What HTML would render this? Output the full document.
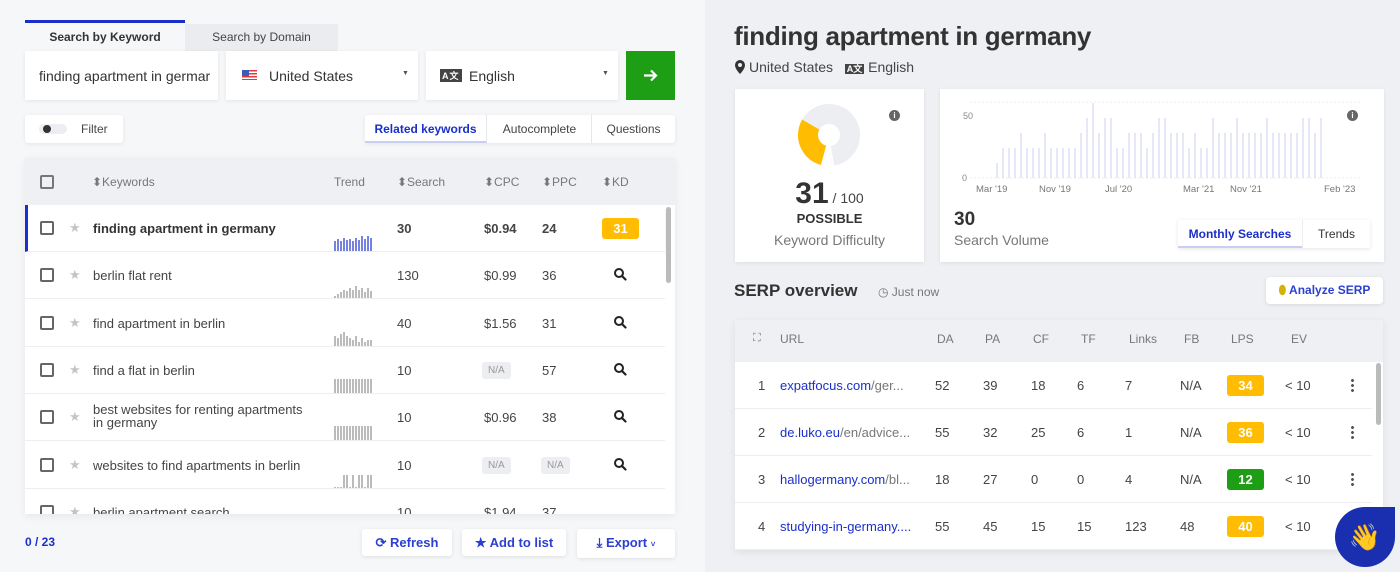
<!DOCTYPE html><html><head><meta charset="utf-8"><style>
*{box-sizing:border-box;margin:0;padding:0}
body{width:1400px;height:572px;overflow:hidden;font-family:"Liberation Sans",sans-serif;background:#f6f7f9;position:relative;color:#333}
.a{position:absolute}
.card{background:#fff;box-shadow:0 1px 4px rgba(0,0,0,.08)}
.t13{font-size:13px}
.cb{width:14px;height:14px;border:2px solid #666;border-radius:2px;position:absolute}
.row .star{color:#c4c4c4!important;font-size:13px;position:absolute}
.row{position:absolute;left:25px;width:640px;height:47px;background:#fff;border-bottom:1px solid #eceef2}
.row span{position:absolute;font-size:13px;color:#444}
.row svg.mg{position:absolute;left:589px;top:16px}
.na{background:#eceef1;color:#999!important;font-size:10px!important;padding:3px 6px;border-radius:3px}
.srow{position:absolute;left:735px;width:637px;height:47px;background:#fff;border-bottom:1px solid #eceef2}
.srow span{position:absolute;font-size:13px;color:#444;top:16px}
.badge{position:absolute;width:37px;height:21px;border-radius:3px;color:#fff;font-size:13px;font-weight:bold;text-align:center;line-height:21px;top:13px}
.dots{position:absolute;left:616px;top:16px;width:3px;height:14px;background:radial-gradient(circle,#555 1.3px,transparent 1.6px) 0 0/3px 5px}
.btn{position:absolute;background:#fff;box-shadow:0 1px 4px rgba(0,0,0,.1);border-radius:3px;font-size:13px;font-weight:bold;color:#2b3fd0;text-align:center;line-height:27px}
</style></head><body>
<svg width="0" height="0" style="position:absolute"><defs><g id="mg"><circle cx="5" cy="5" r="4" fill="none" stroke="#222" stroke-width="2"/><path d="M8 8L11.5 11.5" stroke="#222" stroke-width="2.2" stroke-linecap="round"/></g></defs></svg>
<div class="a" style="left:705px;top:0;width:695px;height:572px;background:#eef0f3"></div>

<div class="a" style="left:25px;top:20px;width:160px;height:31px;background:#f6f7f9;border-top:3px solid #1a2fc9;font-size:12px;font-weight:bold;color:#333;text-align:center;line-height:28px">Search by Keyword</div>
<div class="a" style="left:185px;top:24px;width:153px;height:27px;background:#eaecef;font-size:12px;color:#444;text-align:center;line-height:27px">Search by Domain</div>
<div class="a card" style="left:25px;top:51px;width:193px;height:49px;font-size:14px;color:#333;padding:17px 0 0 14px;white-space:nowrap;overflow:hidden">finding apartment in germar</div>
<div class="a card" style="left:226px;top:51px;width:192px;height:49px;font-size:14px;color:#333">
<div class="a" style="left:16px;top:19px;width:15px;height:10px;background:repeating-linear-gradient(#e0393e 0 1.5px,#fff 1.5px 3px)"><div style="width:7px;height:6px;background:#3c5bb5"></div></div>
<span class="a" style="left:43px;top:17px">United States</span><span class="a" style="left:176px;top:19px;font-size:7px;color:#555">▼</span></div>
<div class="a card" style="left:426px;top:51px;width:192px;height:49px;font-size:14px;color:#333">
<span class="a" style="left:14px;top:18px;font-size:9px;background:#444;color:#fff;padding:0 2px;font-weight:bold;letter-spacing:1px">A文</span>
<span class="a" style="left:43px;top:17px">English</span><span class="a" style="left:176px;top:19px;font-size:7px;color:#555">▼</span></div>
<div class="a" style="left:626px;top:51px;width:49px;height:49px;background:#1e9e14">
<svg class="a" style="left:17px;top:17px" width="15" height="15"><path d="M1 7.5H13M8 2.5L13 7.5L8 12.5" stroke="#fff" stroke-width="2.2" fill="none"/></svg></div>

<div class="a card" style="left:25px;top:115px;width:98px;height:28px;border-radius:3px">
<div class="a" style="left:14px;top:9px;width:28px;height:10px;border-radius:5px;background:#eceef1"><div style="margin:1px 0 0 4px;width:8px;height:8px;border-radius:50%;background:#333"></div></div>
<span class="a t13" style="left:56px;top:7px;color:#444;font-size:12px">Filter</span></div>
<div class="a card" style="left:365px;top:115px;width:310px;height:28px;border-radius:3px;font-size:12px;color:#444">
<div class="a" style="left:0;top:0;width:122px;height:28px;border-bottom:2px solid #c8cff3;border-right:1px solid #e5e7eb;text-align:center;line-height:28px;font-weight:bold;color:#1a2fc9">Related keywords</div>
<div class="a" style="left:123px;top:0;width:104px;height:28px;border-right:1px solid #e5e7eb;text-align:center;line-height:28px">Autocomplete</div>
<div class="a" style="left:227px;top:0;width:83px;height:28px;text-align:center;line-height:28px">Questions</div></div>

<div class="a" style="left:25px;top:158px;width:650px;height:356px;background:#fff;box-shadow:0 2px 8px rgba(0,0,0,.07)"></div>
<div class="a" style="left:25px;top:158px;width:650px;height:47px;background:#eef0f3;font-size:12px;color:#777">
<div class="cb" style="left:15px;top:17px;border-color:#777"></div>
<span class="a" style="left:67px;top:17px">⬍Keywords</span><span class="a" style="left:309px;top:17px">Trend</span>
<span class="a" style="left:372px;top:17px">⬍Search</span><span class="a" style="left:459px;top:17px">⬍CPC</span>
<span class="a" style="left:517px;top:17px">⬍PPC</span><span class="a" style="left:577px;top:17px">⬍KD</span></div>
<div class="a" style="left:25px;top:205px;width:650px;height:309px;overflow:hidden">
<div style="position:relative;left:-25px;top:-205px">
<div class="row" style="top:205px;box-shadow:0 2px 8px rgba(0,0,0,.08);border-left:3px solid #1a2fc9">
<div class="cb" style="left:12px;top:16px"></div><span class="star" style="left:41px;top:15px">★</span>
<span style="left:65px;top:16px;font-weight:bold;color:#333">finding apartment in germany</span>
<svg class="a" style="left:306px;top:30px" width="42" height="16"><g stroke="#1a2fc9" stroke-width="1.2"><path d="M1 16V6M4 16V4M7 16V6M10 16V3M13 16V5M16 16V4M19 16V6M22 16V3M25 16V5M28 16V1M31 16V4M34 16V1M37 16V3"/></g></svg>
<span style="left:369px;top:16px;font-weight:bold">30</span><span style="left:456px;top:16px;font-weight:bold">$0.94</span><span style="left:514px;top:16px;font-weight:bold">24</span>
<div class="badge" style="left:574px;top:13px;background:#ffbc00;width:37px">31</div></div>
<div class="row" style="top:252px"><div class="cb" style="left:15px;top:16px"></div><span class="star" style="left:44px;top:15px">★</span><span style="left:68px;top:16px">berlin flat rent</span>
<svg class="a" style="left:309px;top:30px" width="42" height="16"><path stroke="#777" d="M1 16V14M4 16V12M7 16V10M10 16V8M13 16V9M16 16V6M19 16V8M22 16V4M25 16V8M28 16V6M31 16V10M34 16V6M37 16V9"/></svg>
<span style="left:372px;top:16px">130</span><span style="left:459px;top:16px">$0.99</span><span style="left:517px;top:16px">36</span><svg class="mg" width="13" height="13"><use href="#mg"/></svg></div>
<div class="row" style="top:299px;height:48px"><div class="cb" style="left:15px;top:17px"></div><span class="star" style="left:44px;top:16px">★</span><span style="left:68px;top:17px">find apartment in berlin</span>
<svg class="a" style="left:309px;top:31px" width="42" height="16"><path stroke="#777" d="M1 16V6M4 16V8M7 16V4M10 16V2M13 16V6M16 16V8M19 16V10M22 16V6M25 16V12M28 16V8M31 16V12M34 16V10M37 16V10"/></svg>
<span style="left:372px;top:17px">40</span><span style="left:459px;top:17px">$1.56</span><span style="left:517px;top:17px">31</span><svg class="mg" width="13" height="13" style="top:17px"><use href="#mg"/></svg></div>
<div class="row" style="top:347px"><div class="cb" style="left:15px;top:16px"></div><span class="star" style="left:44px;top:15px">★</span><span style="left:68px;top:16px">find a flat in berlin</span>
<svg class="a" style="left:309px;top:30px" width="42" height="16"><path stroke="#777" d="M1 16V2M4 16V2M7 16V2M10 16V2M13 16V2M16 16V2M19 16V2M22 16V2M25 16V2M28 16V2M31 16V2M34 16V2M37 16V2"/></svg>
<span style="left:372px;top:16px">10</span><span class="na" style="left:457px;top:15px">N/A</span><span style="left:517px;top:16px">57</span><svg class="mg" width="13" height="13"><use href="#mg"/></svg></div>
<div class="row" style="top:394px"><div class="cb" style="left:15px;top:16px"></div><span class="star" style="left:44px;top:15px">★</span><span style="left:68px;top:9px;line-height:13px">best websites for renting apartments<br>in germany</span>
<svg class="a" style="left:309px;top:30px" width="42" height="16"><path stroke="#777" d="M1 16V2M4 16V2M7 16V2M10 16V2M13 16V2M16 16V2M19 16V2M22 16V2M25 16V2M28 16V2M31 16V2M34 16V2M37 16V2"/></svg>
<span style="left:372px;top:16px">10</span><span style="left:459px;top:16px">$0.96</span><span style="left:517px;top:16px">38</span><svg class="mg" width="13" height="13"><use href="#mg"/></svg></div>
<div class="row" style="top:441px;height:48px"><div class="cb" style="left:15px;top:17px"></div><span class="star" style="left:44px;top:16px">★</span><span style="left:68px;top:17px">websites to find apartments in berlin</span>
<svg class="a" style="left:309px;top:31px" width="42" height="16"><path stroke="#777" d="M1 16V15M4 16V15M7 16V15M10 16V3M13 16V3M16 16V15M19 16V3M22 16V15M25 16V3M28 16V3M31 16V15M34 16V3M37 16V3"/></svg>
<span style="left:372px;top:17px">10</span><span class="na" style="left:457px;top:16px">N/A</span><span class="na" style="left:516px;top:16px">N/A</span><svg class="mg" width="13" height="13" style="top:17px"><use href="#mg"/></svg></div>
<div class="row" style="top:489px"><div class="cb" style="left:15px;top:16px"></div><span class="star" style="left:44px;top:15px">★</span><span style="left:68px;top:16px">berlin apartment search</span>
<span style="left:372px;top:16px">10</span><span style="left:459px;top:16px">$1.94</span><span style="left:517px;top:16px">37</span></div>
</div></div>
<div class="a" style="left:666px;top:207px;width:5px;height:76px;border-radius:3px;background:#bbb"></div>

<div class="a" style="left:25px;top:535px;font-size:12px;font-weight:bold;color:#1a2fc9">0 / 23</div>
<div class="btn" style="left:362px;top:529px;width:90px">⟳ Refresh</div>
<div class="btn" style="left:462px;top:529px;width:104px">★ Add to list</div>
<div class="btn" style="left:577px;top:529px;width:98px">⤓ Export <span style="font-size:8px">˅</span></div>

<div class="a" style="left:734px;top:21px;font-size:26px;font-weight:bold;color:#333;letter-spacing:-.3px">finding apartment in germany</div>
<svg class="a" style="left:734px;top:59px" width="12" height="16"><path d="M6 1a5 5 0 0 0-5 5c0 4 5 9 5 9s5-5 5-9a5 5 0 0 0-5-5z" fill="#333"/><circle cx="6" cy="6" r="2" fill="#eef0f3"/></svg>
<div class="a" style="left:749px;top:59px;font-size:14px;color:#444">United States &nbsp; <span style="font-size:9px;background:#444;color:#fff;padding:0 2px;font-weight:bold">A文</span> English</div>

<div class="a card" style="left:735px;top:89px;width:189px;height:173px">
<svg class="a" style="left:0;top:0" width="189" height="90"><g transform="translate(94,46) rotate(-90)" fill="none" stroke-width="20">
<circle r="21" stroke="#eceef1" stroke-dasharray="62.3 69.65"/>
<circle r="21" stroke="#ffbc00" stroke-dasharray="38.5 93.45" transform="rotate(195)"/>
<circle r="21" stroke="#eceef1" stroke-dasharray="22 110" transform="rotate(300)"/></g></svg>
<div class="a" style="left:154px;top:21px;width:11px;height:11px;border-radius:50%;background:#666;color:#fff;font-size:8px;text-align:center;line-height:11px;font-weight:bold">i</div>
<div class="a" style="left:0;width:189px;top:88px;text-align:center"><b style="font-size:30px;color:#333">31</b><span style="font-size:14px;color:#444"> / 100</span></div>
<div class="a" style="left:0;width:189px;top:122px;text-align:center;font-size:13px;font-weight:bold;color:#333">POSSIBLE</div>
<div class="a" style="left:0;width:189px;top:143px;text-align:center;font-size:14px;color:#777">Keyword Difficulty</div></div>

<div class="a card" style="left:940px;top:89px;width:444px;height:173px">
<span class="a" style="left:23px;top:22px;font-size:9px;color:#888">50</span><span class="a" style="left:22px;top:84px;font-size:9px;color:#888">0</span>
<svg class="a" style="left:30px;top:12px" width="390" height="80"><path stroke="#eee" stroke-dasharray="2 2" d="M0 1H390M0 77H390"/>
<g stroke="#cdd2f3" stroke-width="1"><path d="M27 77V62M33 77V47M39 77V47M45 77V47M51 77V32M57 77V47M63 77V47M69 77V47M75 77V32M81 77V47M87 77V47M93 77V47M99 77V47M105 77V47M111 77V32M117 77V17M123 77V2M129 77V32M135 77V17M141 77V17M147 77V47M153 77V47M159 77V32M165 77V32M171 77V32M177 77V47M183 77V32M189 77V17M195 77V17M201 77V32M207 77V32M213 77V32M219 77V47M225 77V32M231 77V47M237 77V47M243 77V17M249 77V32M255 77V32M261 77V32M267 77V17M273 77V32M279 77V32M285 77V32M291 77V32M297 77V17M303 77V32M309 77V32M315 77V32M321 77V32M327 77V32M333 77V17M339 77V17M345 77V32M351 77V17"/></g></svg>
<div class="a" style="left:407px;top:21px;width:11px;height:11px;border-radius:50%;background:#666;color:#fff;font-size:8px;text-align:center;line-height:11px;font-weight:bold">i</div>
<div class="a" style="left:36px;top:95px;font-size:9.5px;color:#777;width:400px">Mar '19<span class="a" style="left:63px">Nov '19</span><span class="a" style="left:129px">Jul '20</span><span class="a" style="left:207px">Mar '21</span><span class="a" style="left:254px">Nov '21</span><span class="a" style="left:348px">Feb '23</span></div>
<div class="a" style="left:14px;top:120px;font-size:19px;font-weight:bold;color:#333">30</div>
<div class="a" style="left:14px;top:143px;font-size:14px;color:#777">Search Volume</div>
<div class="a" style="left:238px;top:131px;width:192px;height:28px;box-shadow:0 1px 4px rgba(0,0,0,.1);font-size:12px;color:#333">
<div class="a" style="left:0;width:124px;height:28px;text-align:center;line-height:28px;font-weight:bold;color:#1a2fc9;border-bottom:2px solid #c8cff3">Monthly Searches</div>
<div class="a" style="left:124px;width:68px;height:28px;text-align:center;line-height:28px;border-left:1px solid #eee">Trends</div></div></div>

<div class="a" style="left:734px;top:281px;font-size:17px;font-weight:bold;color:#333">SERP overview</div>
<div class="a" style="left:878px;top:285px;font-size:12px;color:#777">◷ Just now</div>
<div class="btn" style="left:1266px;top:277px;width:117px;font-size:12px;border-radius:4px"><span style="color:#d4b106">⬮</span> Analyze SERP</div>

<div class="a" style="left:735px;top:320px;width:648px;height:230px;background:#fff;box-shadow:0 2px 8px rgba(0,0,0,.07)"></div>
<div class="a" style="left:735px;top:320px;width:648px;height:42px;background:#eef0f3;font-size:12px;color:#777">
<span class="a" style="left:18px;top:12px;font-size:11px">⛶</span><span class="a" style="left:45px;top:12px">URL</span><span class="a" style="left:202px;top:12px">DA</span><span class="a" style="left:250px;top:12px">PA</span><span class="a" style="left:298px;top:12px">CF</span><span class="a" style="left:346px;top:12px">TF</span><span class="a" style="left:394px;top:12px">Links</span><span class="a" style="left:449px;top:12px">FB</span><span class="a" style="left:496px;top:12px">LPS</span><span class="a" style="left:556px;top:12px">EV</span></div>
<div class="srow" style="top:362px"><span style="left:23px">1</span><span style="left:45px;color:#1a2fc9">expatfocus.com<span style="color:#777;position:static">/ger...</span></span><span style="left:200px">52</span><span style="left:248px">39</span><span style="left:296px">18</span><span style="left:342px">6</span><span style="left:390px">7</span><span style="left:445px">N/A</span><div class="badge" style="left:492px;background:#ffbc00">34</div><span style="left:550px">&lt; 10</span><div class="dots"></div></div>
<div class="srow" style="top:409px"><span style="left:23px">2</span><span style="left:45px;color:#1a2fc9">de.luko.eu<span style="color:#777;position:static">/en/advice...</span></span><span style="left:200px">55</span><span style="left:248px">32</span><span style="left:296px">25</span><span style="left:342px">6</span><span style="left:390px">1</span><span style="left:445px">N/A</span><div class="badge" style="left:492px;background:#ffbc00">36</div><span style="left:550px">&lt; 10</span><div class="dots"></div></div>
<div class="srow" style="top:456px"><span style="left:23px">3</span><span style="left:45px;color:#1a2fc9">hallogermany.com<span style="color:#777;position:static">/bl...</span></span><span style="left:200px">18</span><span style="left:248px">27</span><span style="left:296px">0</span><span style="left:342px">0</span><span style="left:390px">4</span><span style="left:445px">N/A</span><div class="badge" style="left:492px;background:#1e9e14">12</div><span style="left:550px">&lt; 10</span><div class="dots"></div></div>
<div class="srow" style="top:503px"><span style="left:23px">4</span><span style="left:45px;color:#1a2fc9">studying-in-germany....</span><span style="left:200px">55</span><span style="left:248px">45</span><span style="left:296px">15</span><span style="left:342px">15</span><span style="left:390px">123</span><span style="left:445px">48</span><div class="badge" style="left:492px;background:#ffbc00">40</div><span style="left:550px">&lt; 10</span></div>
<div class="a" style="left:1376px;top:363px;width:5px;height:62px;border-radius:3px;background:#bbb"></div>
<div class="a" style="left:1335px;top:507px;width:60px;height:60px;background:#1a2fb0;border-radius:50% 0 50% 50%;text-align:center;line-height:60px;font-size:26px">👋</div>
</body></html>
